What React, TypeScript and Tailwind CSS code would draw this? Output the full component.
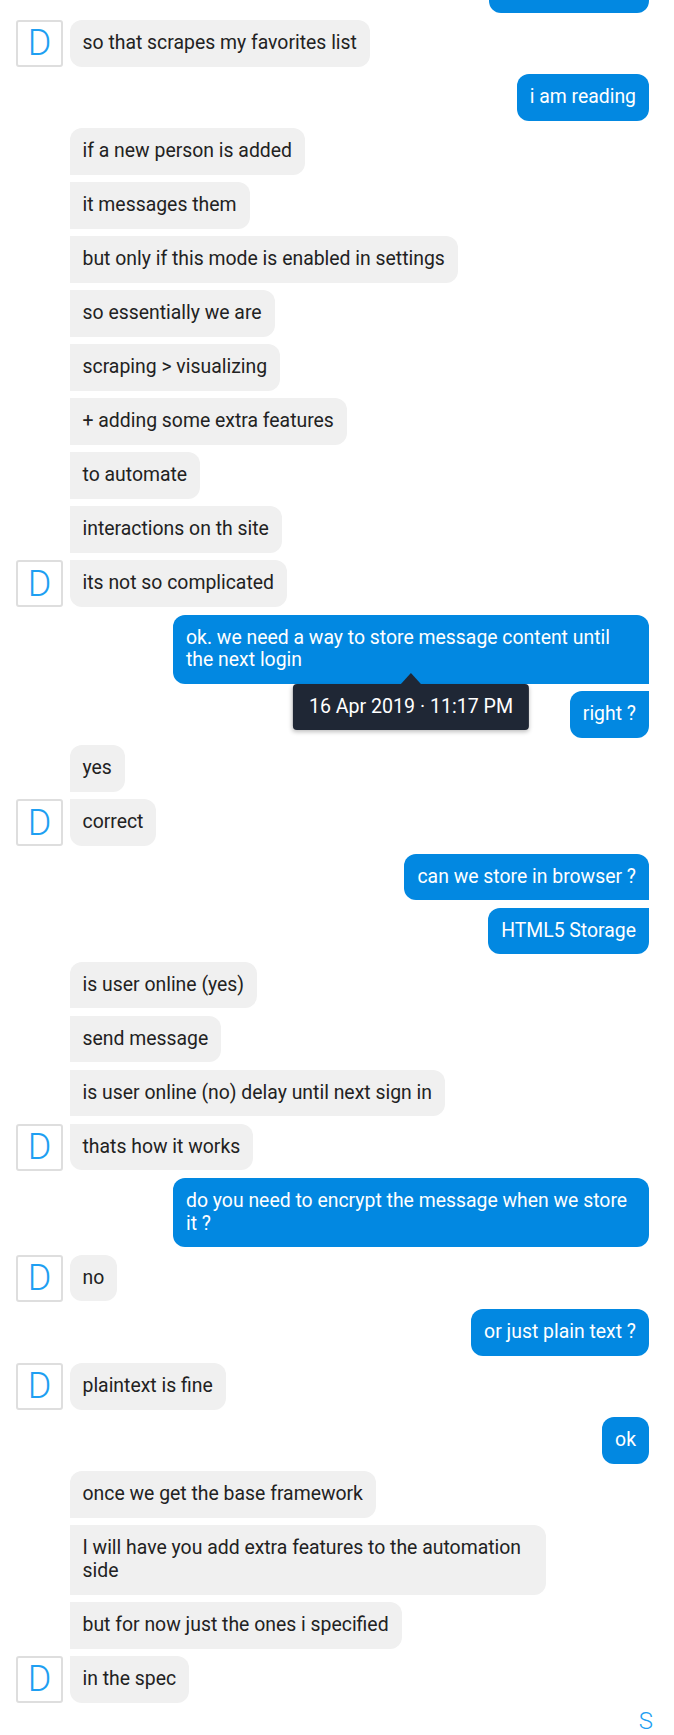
import React from "react";

type Msg = { from: "me" | "them"; text: string; tip?: string };

const messages: Msg[] = [
    { from: "them", text: "so that scrapes my favorites list" },
    { from: "me", text: "i am reading" },
    { from: "them", text: "if a new person is added" },
    { from: "them", text: "it messages them" },
    { from: "them", text: "but only if this mode is enabled in settings" },
    { from: "them", text: "so essentially we are" },
    { from: "them", text: "scraping > visualizing" },
    { from: "them", text: "+ adding some extra features" },
    { from: "them", text: "to automate" },
    { from: "them", text: "interactions on th site" },
    { from: "them", text: "its not so complicated" },
    { from: "me", text: "ok. we need a way to store message content until the next login", tip: "16 Apr 2019 · 11:17 PM" },
    { from: "me", text: "right ?" },
    { from: "them", text: "yes" },
    { from: "them", text: "correct" },
    { from: "me", text: "can we store in browser ?" },
    { from: "me", text: "HTML5 Storage" },
    { from: "them", text: "is user online (yes)" },
    { from: "them", text: "send message" },
    { from: "them", text: "is user online (no) delay until next sign in" },
    { from: "them", text: "thats how it works" },
    { from: "me", text: "do you need to encrypt the message when we store it ?" },
    { from: "them", text: "no" },
    { from: "me", text: "or just plain text ?" },
    { from: "them", text: "plaintext is fine" },
    { from: "me", text: "ok" },
    { from: "them", text: "once we get the base framework" },
    { from: "them", text: "I will have you add extra features to the automation side" },
    { from: "them", text: "but for now just the ones i specified" },
    { from: "them", text: "in the spec" },
];

const Avatar = () => (
    <div className="w-[47px] h-[47px] border-2 border-[#dedede] rounded-[3px] bg-white flex items-center justify-center">
        <span className="text-[36px] leading-none font-light text-[#1e9ff2]">D</span>
    </div>
);

const Tooltip = ({ text }: { text: string }) => (
    <div className="absolute top-full left-1/2 -translate-x-1/2 z-10 bg-[#1f2735] text-white text-[19.6px] leading-[22px] px-4 py-3 rounded-[4px] whitespace-nowrap shadow-[0_2px_4px_rgba(0,0,0,0.25)]">
        <div className="absolute -top-[11px] left-1/2 -translate-x-1/2 w-0 h-0 border-x-[10px] border-x-transparent border-b-[11px] border-b-[#1f2735]"></div>
        {text}
    </div>
);

const App = () => {
    return (
        <div className="min-h-screen bg-white pl-4 pr-[25px] pb-6 flex flex-col gap-[7.3px] [font-family:Roboto,sans-serif] text-[19.4px] leading-[22.7px]">
            {/* previous message, scrolled out of view */}
            <div className="flex justify-end -mt-[34px]">
                <div className="w-[160px] h-[46.7px] bg-[#0288e1] rounded-[12px] rounded-tr-none"></div>
            </div>

            {messages.map((m, i) => {
                const prevSame = i > 0 && messages[i - 1].from === m.from;
                const nextSame = i < messages.length - 1 && messages[i + 1].from === m.from;

                if (m.from === "them") {
                    return (
                        <div className="flex items-start" key={i}>
                            <div className="w-[47px] shrink-0 mr-[6.5px]">{!nextSame && <Avatar />}</div>
                            <div
                                className={`max-w-[476px] bg-[#f0f0f0] text-[#222222] px-[13px] py-3 rounded-[12px] ${prevSame ? "rounded-tl-none" : ""} ${nextSame ? "rounded-bl-none" : ""}`}
                            >
                                {m.text}
                            </div>
                        </div>
                    );
                }

                return (
                    <div className="flex justify-end" key={i}>
                        <div
                            className={`relative max-w-[476px] bg-[#0288e1] text-white px-[13px] py-3 rounded-[12px] ${prevSame ? "rounded-tr-none" : ""} ${nextSame ? "rounded-br-none" : ""}`}
                        >
                            {m.text}
                            {m.tip && <Tooltip text={m.tip} />}
                        </div>
                    </div>
                );
            })}

            <div className="flex justify-end -mr-[4px] -mt-[1px]">
                <span className="text-[24px] leading-none font-light text-[#1e9ff2]">S</span>
            </div>
        </div>
    );
};

export default App;
